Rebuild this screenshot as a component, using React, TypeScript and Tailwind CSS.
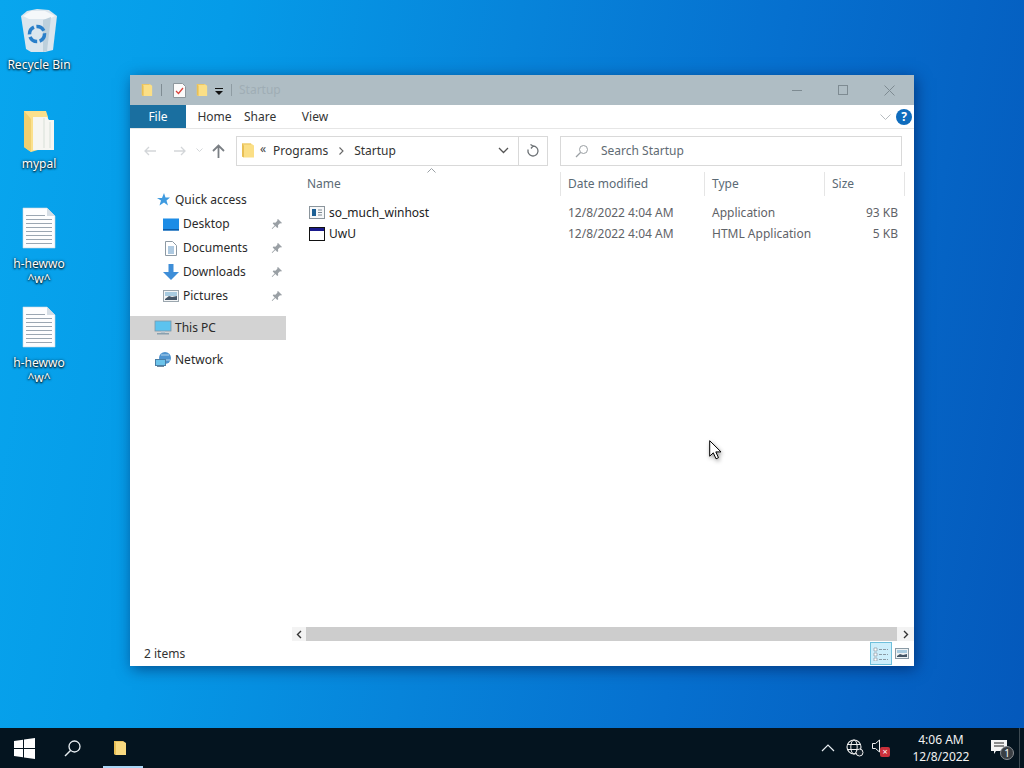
import React from "react";

const Folder = ({ s = 14, h = 16, c = "#fbdf86" }: { s?: number; h?: number; c?: string }) => (
  <svg width={s} height={h} viewBox="0 0 14 16" className="shrink-0">
    <path d="M1 1h9l3 2v12H3l-2-1z" fill={c} />
    <path d="M1 1h9v1H1z" fill="#e9c25f" />
    <path d="M1 1v13l2 1V3z" fill="#e8bf55" />
  </svg>
);

const Pin = () => (
  <svg width="12" height="12" viewBox="0 0 12 12" className="shrink-0">
    <path d="M7 1l4 4-1 .6-1-.3-2 2 .2 2-.9.7-2-2-3 3-.6-.6 3-3-2-2 .7-1 2 .3 2-2-.2-1z" fill="#9aa0a5" />
  </svg>
);

const DocIcon = () => (
  <svg width="34" height="42" viewBox="0 0 34 42">
    <path d="M1 1h24l8 8v32H1z" fill="#fdfdfe" stroke="#cfd9e2" strokeWidth="0.6" />
    <path d="M25 1v8h8z" fill="#d5dde5" />
    {[8, 12, 16, 20, 24, 28, 32, 36].map((y) => (
      <rect key={y} x="4" y={y} width={y < 10 ? 19 : 26} height="1" fill="#9ba6b2" />
    ))}
  </svg>
);

const DesktopItem = ({ top, children, icon }: { top: number; children: React.ReactNode; icon: React.ReactNode }) => (
  <div className="absolute left-0 w-[78px] flex flex-col items-center" style={{ top }}>
    {icon}
    <div className="text-white text-[12px] leading-[15px] text-center [text-shadow:0_1px_2px_#000,0_0_3px_#000a]">{children}</div>
  </div>
);

const NavRow = ({ icon, label, pin, inset, selected, mt }: { icon: React.ReactNode; label: string; pin?: boolean; inset?: boolean; selected?: boolean; mt?: string }) => (
  <div className={`h-6 flex items-center ${selected ? "bg-[#d3d3d3]" : ""} ${inset ? "pl-[32px]" : "pl-[24px]"} ${mt ?? ""}`}>
    <div className={`w-[18px] flex justify-center ${inset ? "mr-[3px]" : "mr-[3px]"}`}>{icon}</div>
    <span className="text-[12px] text-[#2b2b2b] grow">{label}</span>
    {pin && <span className="mr-[3px]"><Pin /></span>}
  </div>
);

const Monitor = () => (
  <svg width="18" height="16" viewBox="0 0 18 16">
    <rect x="1" y="1" width="16" height="10" fill="#5cc3ef" stroke="#7d97a8" strokeWidth="0.8" />
    <rect x="3" y="13" width="12" height="1.5" fill="#8aa0ae" />
    <rect x="7" y="11" width="4" height="2" fill="#b4c2cc" />
  </svg>
);

const Row = ({ icon, name, type, size }: { icon: React.ReactNode; name: string; type: string; size: string }) => (
  <div className="h-[21px] grid grid-cols-[269px_144px_120px_73px] items-center text-[12px] text-[#5f6368]">
    <div className="flex items-center pl-[17px] gap-[4px] text-[#222]">{icon}<span>{name}</span></div>
    <div className="pl-[7px]">12/8/2022 4:04 AM</div>
    <div className="pl-[7px]">{type}</div>
    <div className="text-right">{size}</div>
  </div>
);

const Header = ({ label, line = true }: { label: string; line?: boolean }) => (
  <div className={`h-[24px] flex items-center pl-[7px] text-[12px] text-[#5b6a75] ${line ? "border-r border-[#e5e5e5]" : ""}`}>{label}</div>
);

export default function App() {
  return (
    <div
      className="relative w-[1024px] h-[768px] overflow-hidden bg-[linear-gradient(100deg,#08a6ee_0%,#059be8_20%,#0784da_45%,#0670cf_68%,#0458bb_100%)] [font-family:'Noto_Sans','Open_Sans',sans-serif]"
    >
      <DesktopItem
        top={8}
        icon={
          <svg width="40" height="46" viewBox="0 0 40 46" className="mb-[3px]">
            <path d="M2 8l6-5 10-2 12 1 8 6-4 34-8 2H12l-5-3z" fill="#dbe6ee" />
            <path d="M4 8l8-5 14 0 10 5-6 3H10z" fill="#f5f8fa" />
            <path d="M24 12l8-3-4 34-4 1z" fill="#bdd0dc" />
            <circle cx="18" cy="26" r="7.5" fill="none" stroke="#2a7fc9" strokeWidth="3.5" strokeDasharray="9 2.5" />
          </svg>
        }
      >
        Recycle Bin
      </DesktopItem>
      <DesktopItem
        top={110}
        icon={
          <svg width="34" height="42" viewBox="0 0 34 42" className="mb-[4px]">
            <path d="M2 1h22l2 6v30L9 42l-7-5z" fill="#fbe08c" />
            <path d="M11 7h14l2 3h5v30H11z" fill="#f6f6f2" />
            <path d="M22 8v30M28 12v26" stroke="#d8e0d8" />
            <path d="M2 1v36l7 5V9z" fill="#f0cf70" />
          </svg>
        }
      >
        mypal
      </DesktopItem>
      <DesktopItem top={207} icon={<div className="mb-[7px]"><DocIcon /></div>}>
        h-hewwo
        <br />
        ^w^
      </DesktopItem>
      <DesktopItem top={306} icon={<div className="mb-[7px]"><DocIcon /></div>}>
        h-hewwo
        <br />
        ^w^
      </DesktopItem>

      {/* Explorer window */}
      <div className="absolute left-[130px] top-[75px] w-[784px] h-[591px] bg-white flex flex-col shadow-[2px_3px_14px_rgba(0,20,70,0.55)]">
        <div className="h-[30px] bg-[#afbdc4] flex items-center shrink-0">
          <div className="ml-[11px]"><Folder s={12} h={14} /></div>
          <div className="ml-[8px] w-px h-[12px] bg-[#7f8c93]" />
          <svg width="13" height="15" viewBox="0 0 13 15" className="ml-[11px]">
            <path d="M.5.5h9l3 3v11H.5z" fill="#fbfbfb" stroke="#8d979d" />
            <path d="M3 8l2.500 2.500L10 5" fill="none" stroke="#d8433c" strokeWidth="1.300" />
          </svg>
          <div className="ml-[10px]"><Folder s={12} h={14} /></div>
          <svg width="8" height="7" viewBox="0 0 8 7" className="ml-[7px] mt-[2px]">
            <rect y="0" width="8" height="1" fill="#111" />
            <path d="M0 3h8L4 7z" fill="#111" />
          </svg>
          <div className="ml-[8px] w-px h-[12px] bg-[#8f9ca3]" />
          <span className="ml-[7px] text-[12px] text-[#9fadb5]">Startup</span>
          <div className="ml-auto flex items-center mr-[2px]">
            <div className="w-[46px] flex justify-center"><div className="w-[10px] h-px bg-[#7e8b92]" /></div>
            <div className="w-[46px] flex justify-center"><div className="w-[10px] h-[10px] border border-[#7e8b92]" /></div>
            <div className="w-[46px] flex justify-center">
              <svg width="11" height="11" viewBox="0 0 11 11"><path d="M.5.5l10 10M10.500.5l-10 10" stroke="#7e8b92" /></svg>
            </div>
          </div>
        </div>

        <div className="h-[24px] flex items-center border-b border-[#e6e6e6] shrink-0 relative">
          <div className="w-[56px] h-full bg-[#1a6fa0] text-white text-[12px] flex items-center justify-center">File</div>
          <div className="w-[57px] text-center text-[12px] text-[#333]">Home</div>
          <div className="w-[29px] ml-[1px] text-center text-[12px] text-[#333] mx-[14px]">Share</div>
          <div className="ml-[13px] w-[30px] text-center text-[12px] text-[#333]">View</div>
          <div className="ml-auto flex items-center gap-[5px] mr-[2px]">
            <svg width="11" height="6" viewBox="0 0 11 6"><path d="M.5.5l5 5 5-5" fill="none" stroke="#b7bcc0" /></svg>
            <div className="w-[16px] h-[16px] rounded-full bg-[#0f6cbd] text-white text-[12px] font-bold flex items-center justify-center">?</div>
          </div>
        </div>

        <div className="h-[43px] flex items-center shrink-0">
          <div className="w-[106px] flex items-center text-[#c9c9c9] relative">
            <svg width="14" height="12" viewBox="0 0 14 12" className="ml-[13px]"><path d="M13 6H2M6 2L2 6l4 4" fill="none" stroke="#d3d6d9" strokeWidth="1.300" /></svg>
            <svg width="14" height="12" viewBox="0 0 14 12" className="ml-[16px]"><path d="M1 6h11M8 2l4 4-4 4" fill="none" stroke="#d3d6d9" strokeWidth="1.300" /></svg>
            <svg width="7" height="5" viewBox="0 0 7 5" className="ml-[9px]"><path d="M.5.5l3 3 3-3" fill="none" stroke="#d3d6d9" /></svg>
            <svg width="13" height="14" viewBox="0 0 13 14" className="ml-[9px]"><path d="M6.500 14V2M1 7l5.500-5.500L12 7" fill="none" stroke="#7a7f84" strokeWidth="1.800" /></svg>
          </div>
          <div className="w-[312px] h-[30px] border border-[#d9d9d9] flex items-center">
            <div className="ml-[4px]"><Folder s={14} h={17} /></div>
            <span className="ml-[5px] text-[12px] text-[#444] leading-none mb-[3px]">«</span>
            <span className="ml-[7px] text-[12px] text-[#333]">Programs</span>
            <svg width="5" height="8" viewBox="0 0 5 8" className="ml-[11px]"><path d="M.5.5L4 4 .5 7.500" fill="none" stroke="#666" strokeWidth="1.100" /></svg>
            <span className="ml-[10px] text-[12px] text-[#333]">Startup</span>
            <svg width="11" height="7" viewBox="0 0 11 7" className="ml-auto mr-[9px]"><path d="M1 1l4.500 4.500L10 1" fill="none" stroke="#555" strokeWidth="1.300" /></svg>
            <div className="w-[29px] h-full border-l border-[#d9d9d9] flex items-center justify-center">
              <svg width="12" height="13" viewBox="0 0 12 13"><path d="M6 2a5 5 0 1 1-4.800 3.500M6 2L3.500.5M6 2L4 4.500" fill="none" stroke="#6d7276" strokeWidth="1.300" /></svg>
            </div>
          </div>
          <div className="ml-[12px] w-[342px] h-[30px] border border-[#d9d9d9] flex items-center">
            <svg width="14" height="14" viewBox="0 0 14 14" className="ml-[14px]"><circle cx="8.500" cy="5.500" r="4" fill="none" stroke="#9a9fa3" /><path d="M5.500 8.500L1 13" stroke="#9a9fa3" strokeWidth="1.200" /></svg>
            <span className="ml-[12px] text-[12px] text-[#5f6b73]">Search Startup</span>
          </div>
        </div>

        <div className="flex grow min-h-0">
          <div className="w-[156px] shrink-0 pt-[16px]">
            <NavRow
              label="Quick access"
              icon={<svg width="16" height="16" viewBox="0 0 16 16"><path d="M9 1l1.500 4.500H15l-3.500 3 1.500 5-4-3-4.500 3 1.500-5L2 6h5z" fill="#3f9be0" /></svg>}
            />
            <NavRow inset pin label="Desktop" icon={<svg width="16" height="13" viewBox="0 0 16 13"><rect width="16" height="12" y="0.500" fill="#1c8ce6" /><rect y="11" width="16" height="1.500" fill="#0c5aa6" /></svg>} />
            <NavRow inset pin label="Documents" icon={<svg width="12" height="15" viewBox="0 0 12 15"><path d="M.5.500h7l4 4v10H.5z" fill="#fff" stroke="#8d99a3" /><path d="M3 6h6M3 8h6M3 10h6M3 12h6" stroke="#5d93c2" /></svg>} />
            <NavRow inset pin label="Downloads" icon={<svg width="16" height="16" viewBox="0 0 16 16"><path d="M5.500 0h5v8H16l-8 8-8-8h5.500z" fill="#3e8ed8" /></svg>} />
            <NavRow inset pin label="Pictures" icon={<svg width="16" height="13" viewBox="0 0 16 13"><rect x=".5" y=".5" width="15" height="11" fill="#f3f5f6" stroke="#9ba6ae" /><path d="M2 9l4-3 3 1 5-1v4H2z" fill="#456" /><rect x="2" y="2" width="12" height="4" fill="#a8cbe0" /></svg>} />
            <div className="mt-[8px]" />
            <NavRow selected label="This PC" icon={<Monitor />} />
            <div className="mt-[8px]" />
            <NavRow
              label="Network"
              icon={<svg width="17" height="16" viewBox="0 0 17 16"><circle cx="10" cy="6" r="6" fill="#4f94cf" /><path d="M6 3h8M5 8h10" stroke="#b5d6ee" /><rect x="0.500" y="7.500" width="10" height="6" fill="#6cc3ea" stroke="#4a7ea5" /><rect x="2" y="14" width="7" height="1" fill="#6e8aa0" /></svg>}
            />
          </div>

          <div className="ml-[6px] grow flex flex-col min-w-0 relative">
            <svg width="9" height="5" viewBox="0 0 9 5" className="absolute left-[135px] top-[-4px]"><path d="M.5 4.500l4-4 4 4" fill="none" stroke="#9aa0a5" /></svg>
            <div className="grid grid-cols-[269px_144px_120px_80px] h-[24px] mr-[9px] shrink-0">
              <div className="border-r border-[#e5e5e5] pl-[15px] flex items-center text-[12px] text-[#5b6a75]">Name</div>
              <Header label="Date modified" />
              <Header label="Type" />
              <Header label="Size" />
            </div>
            <div className="pt-[6px] grow">
              <Row
                name="so_much_winhost"
                type="Application"
                size="93 KB"
                icon={<svg width="16" height="13" viewBox="0 0 16 13"><rect x=".5" y=".5" width="15" height="12" fill="#f7f8f9" stroke="#8b959c" /><rect x="3" y="3" width="4" height="7" fill="#1d5f94" /><path d="M9 4h4M9 6.500h4M9 9h4" stroke="#7f8a92" /></svg>}
              />
              <Row
                name="UwU"
                type="HTML Application"
                size="5 KB"
                icon={<svg width="16" height="14" viewBox="0 0 16 14"><rect x=".5" y=".5" width="15" height="13" fill="#fff" stroke="#111" /><rect x="1" y="1" width="14" height="3" fill="#1a1a8c" /></svg>}
              />
            </div>
            <div className="h-[14px] flex items-center shrink-0 bg-[#f3f3f3]">
              <div className="w-[14px] flex justify-center"><svg width="6" height="9" viewBox="0 0 6 9"><path d="M5 1L1.500 4.500 5 8" fill="none" stroke="#333" strokeWidth="1.400" /></svg></div>
              <div className="w-[591px] h-full bg-[#cdcdcd]" />
              <div className="grow flex justify-center"><svg width="6" height="9" viewBox="0 0 6 9"><path d="M1 1l3.500 3.500L1 8" fill="none" stroke="#333" strokeWidth="1.400" /></svg></div>
            </div>
          </div>
        </div>

        <div className="h-[25px] flex items-center shrink-0 relative">
          <span className="ml-[14px] text-[12px] text-[#333]">2 items</span>
          <div className="ml-auto flex items-center mr-[5px]">
            <div className="w-[22px] h-[23px] bg-[#cdeefb] border border-[#6fc0dc] flex items-center justify-center">
              <svg width="16" height="14" viewBox="0 0 16 14"><path d="M1 1h3v3H1zM1 6h3v3H1zM1 11h3v3H1z" fill="#fff" stroke="#8a9aa5" strokeWidth=".7" /><path d="M6 2.500h9M6 7.500h9M6 12.500h9" stroke="#8a9aa5" strokeDasharray="3 1" /></svg>
            </div>
            <div className="ml-[3px]">
              <svg width="14" height="11" viewBox="0 0 14 11"><rect x=".5" y=".5" width="13" height="10" fill="#eef2f4" stroke="#8a9aa5" /><rect x="2" y="2" width="10" height="3" fill="#a8cbe0" /><path d="M2 8l3-2 3 1 4-1v3H2z" fill="#456" /></svg>
            </div>
          </div>
        </div>
      </div>

      {/* Mouse pointer */}
      <svg width="15" height="20" viewBox="0 0 15 20" className="absolute left-[709px] top-[440px] drop-shadow-[1px_2px_2px_rgba(0,0,0,0.4)]">
        <path d="M.7.7v15.500l3.600-3.400 2.700 6 2.500-1.100-2.700-5.800H12z" fill="#fff" stroke="#000" />
      </svg>

      {/* Taskbar */}
      <div className="absolute left-0 right-0 bottom-0 h-[40px] bg-[#04141f] flex items-center">
        <div className="w-[48px] flex justify-center">
          <svg width="21" height="21" viewBox="0 0 21 21"><path d="M0 3l9-1.300V10H0zM10 1.500L21 0v10H10zM0 11h9v8.300L0 18zM10 11h11v10l-11-1.500z" fill="#fff" /></svg>
        </div>
        <div className="w-[48px] flex justify-center">
          <svg width="17" height="17" viewBox="0 0 17 17"><circle cx="10.500" cy="6.500" r="5.500" fill="none" stroke="#e8eef2" strokeWidth="1.300" /><path d="M6.500 10.500L1 16" stroke="#e8eef2" strokeWidth="1.500" /></svg>
        </div>
        <div className="relative w-[48px] h-full flex items-center justify-center">
          <Folder s={14} h={20} c="#f9da80" />
          <div className="absolute left-[7px] w-[40px] bottom-0 h-[2px] bg-[#a9d5f5]" />
        </div>
        <div className="ml-auto flex items-center h-full text-white">
          <svg width="14" height="8" viewBox="0 0 14 8" className="mr-[11px]"><path d="M1 7l6-6 6 6" fill="none" stroke="#e8eef2" strokeWidth="1.200" /></svg>
          <svg width="18" height="18" viewBox="0 0 18 18" className="mr-[8px]">
            <circle cx="8" cy="8" r="7" fill="none" stroke="#f0f0f0" strokeWidth="1.100" />
            <ellipse cx="8" cy="8" rx="3.200" ry="7" fill="none" stroke="#f0f0f0" />
            <path d="M1 5.500h14M1 10.500h14" stroke="#f0f0f0" />
            <circle cx="13.500" cy="13.500" r="3.500" fill="#16222c" stroke="#f0f0f0" />
          </svg>
          <div className="relative w-[18px] h-[18px] mr-[13px]">
            <svg width="10" height="14" viewBox="0 0 10 14" className="absolute left-0 top-0"><path d="M.5 4.500h3l4-3.500v12l-4-3.500h-3z" fill="none" stroke="#f0f0f0" /></svg>
            <div className="absolute left-[8px] top-[8px] w-[10px] h-[10px] rounded-[2px] bg-[#c9303a] text-white text-[9px] leading-[10px] text-center">×</div>
          </div>
          <div className="w-[76px] text-center text-[12px] leading-[17px] text-[#f2f2f2]">
            <div>4:06 AM</div>
            <div>12/8/2022</div>
          </div>
          <div className="relative w-[40px] h-full flex items-center justify-center">
            <svg width="16" height="14" viewBox="0 0 16 14" className="-mt-[2px]"><path d="M0 0h16v11H5l-2 3v-3H0z" fill="#f5f5f5" /><path d="M3 3h10M3 6h10" stroke="#222" /></svg>
            <div className="absolute left-[21px] top-[18px] w-[14px] h-[14px] rounded-full bg-[#3a3f44] border border-[#8a8f94] text-[10px] leading-[12px] text-center text-white">1</div>
          </div>
          <div className="w-px h-full bg-[#3d4a52] mr-[4px]" />
        </div>
      </div>
    </div>
  );
}
